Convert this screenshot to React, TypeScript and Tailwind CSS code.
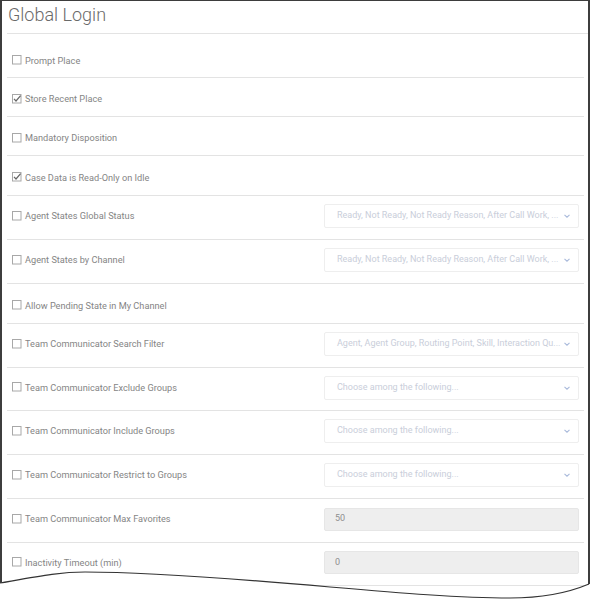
import React from "react";

type Field =
  | { kind: "none" }
  | { kind: "select"; text: string }
  | { kind: "input"; value: string };

interface Row {
  label: string;
  checked?: boolean;
  h: string;
  field: Field;
}

const ROWS: Row[] = [
  { label: "Prompt Place", h: "h-[44px] pt-[10px]", field: { kind: "none" } },
  { label: "Store Recent Place", checked: true, h: "h-[39px] pt-[4px]", field: { kind: "none" } },
  { label: "Mandatory Disposition", h: "h-[39px] pt-[4px]", field: { kind: "none" } },
  { label: "Case Data is Read-Only on Idle", checked: true, h: "h-[40px] pt-[4px]", field: { kind: "none" } },
  {
    label: "Agent States Global Status",
    h: "h-[44px] pb-[3px]",
    field: { kind: "select", text: "Ready, Not Ready, Not Ready Reason, After Call Work, ..." },
  },
  {
    label: "Agent States by Channel",
    h: "h-[44px] pb-[3px]",
    field: { kind: "select", text: "Ready, Not Ready, Not Ready Reason, After Call Work, ..." },
  },
  { label: "Allow Pending State in My Channel", h: "h-[40px] pt-[4px]", field: { kind: "none" } },
  {
    label: "Team Communicator Search Filter",
    h: "h-[44px] pb-[3px]",
    field: { kind: "select", text: "Agent, Agent Group, Routing Point, Skill, Interaction Qu..." },
  },
  {
    label: "Team Communicator Exclude Groups",
    h: "h-[43px] pb-[3px]",
    field: { kind: "select", text: "Choose among the following..." },
  },
  {
    label: "Team Communicator Include Groups",
    h: "h-[44px] pb-[3px]",
    field: { kind: "select", text: "Choose among the following..." },
  },
  {
    label: "Team Communicator Restrict to Groups",
    h: "h-[44px] pb-[3px]",
    field: { kind: "select", text: "Choose among the following..." },
  },
  { label: "Team Communicator Max Favorites", h: "h-[44px] pb-[3px]", field: { kind: "input", value: "50" } },
  { label: "Inactivity Timeout (min)", h: "h-[43px] pb-[3px]", field: { kind: "input", value: "0" } },
];

function Checkbox({ checked }: { checked?: boolean }) {
  return (
    <svg width="10" height="10" viewBox="0 0 10 10" className="shrink-0">
      <rect x="0.5" y="0.5" width="8.5" height="8.5" fill="#fff" stroke="#a8a8a8" strokeWidth="1" />
      {checked && <polyline points="2,4.8 4,7 8.6,1.6" fill="none" stroke="#666" strokeWidth="1.2" />}
    </svg>
  );
}

function Chevron() {
  return (
    <svg width="6" height="4" viewBox="0 0 6 4" className="shrink-0">
      <polyline points="0.5,0.8 3,3.2 5.5,0.8" fill="none" stroke="#a9badb" strokeWidth="1.1" />
    </svg>
  );
}

function FieldBox({ field }: { field: Field }) {
  if (field.kind === "select") {
    return (
      <div className="w-[255px] h-[24px] border border-[#eeeeee] rounded-[2px] bg-white flex items-center pl-[12px] pr-[8px] gap-[2px]">
        <span className="flex-1 whitespace-nowrap text-[9px] text-[#c9ceda]">{field.text}</span>
        <Chevron />
      </div>
    );
  }
  if (field.kind === "input") {
    return (
      <div className="w-[255px] h-[23px] border border-[#e6e6e6] rounded-[2px] bg-[#eeeeee] flex items-center pl-[10px]">
        <span className="text-[9px] text-[#8e8e8e]">{field.value}</span>
      </div>
    );
  }
  return null;
}

export default function App() {
  return (
    <div className="relative w-[591px] h-[599px] bg-white overflow-hidden" style={{ fontFamily: "Roboto, 'Liberation Sans', sans-serif" }}>
      <div className="w-[590px] h-[599px] border-l-2 border-t border-r-2 border-[#3d3d3d]">
        {/* title */}
        <div className="ml-[5px] h-[33px] border-b border-[#e3e3e3] pl-[1px] pt-[2px]">
          <h1 className="text-[18px] leading-[24px] font-light text-[#6a6a6a]">Global Login</h1>
        </div>

        {/* rows */}
        <div className="ml-[5px] mr-[4px]">
          {ROWS.map((row) => (
            <div key={row.label} className={`${row.h} flex items-center border-b border-[#e3e3e3]`}>
              <div className="w-[317px] shrink-0 flex items-center gap-[3px] pl-[5px]">
                <Checkbox checked={row.checked} />
                <span className="text-[9.2px] text-[#858585]">{row.label}</span>
              </div>
              <FieldBox field={row.field} />
            </div>
          ))}
        </div>
      </div>

      {/* torn bottom edge */}
      <svg className="absolute left-0 top-0 pointer-events-none" width="591" height="599" viewBox="0 0 591 599">
        <path
          d="M0,583 C40,576 60,572 85,572 C150,572 250,580 330,587 C400,593 460,598 510,598 C545,598 570,592 589,584 L591,584 L591,599 L0,599 Z"
          fill="#fff"
        />
        <path
          d="M0,583 C40,576 60,572 85,572 C150,572 250,580 330,587 C400,593 460,598 510,598 C545,598 570,592 589,584"
          fill="none"
          stroke="#333"
          strokeWidth="1.2"
        />
      </svg>
    </div>
  );
}
